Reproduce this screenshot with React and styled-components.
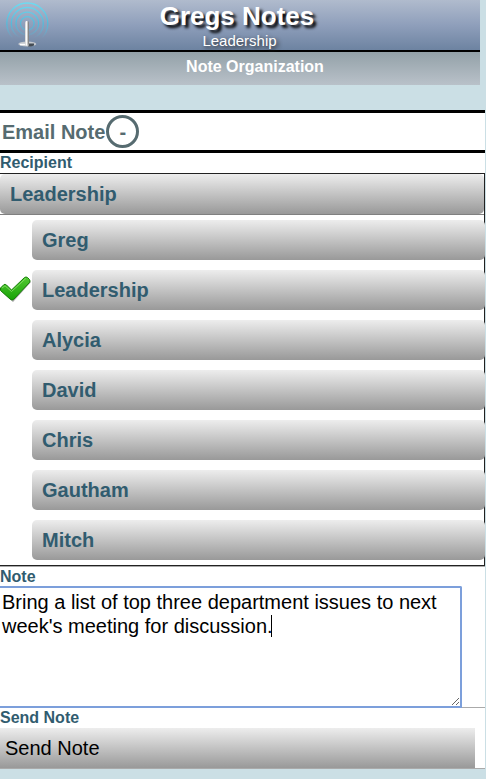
import React, { useState } from "react";
import styled, { createGlobalStyle } from "styled-components";

const GlobalStyle = createGlobalStyle`
  *, *::before, *::after { box-sizing: border-box; }
  body {
    margin: 0;
    background: #cbdfe5;
    font-family: "Liberation Sans", Arial, sans-serif;
    overflow-x: hidden;
  }
`;

const steel = "#315c6f";
const silver = "linear-gradient(#ededed, #999999)";

const Page = styled.div`
  display: flex;
  flex-direction: column;
  padding-right: 1px;
`;

const Header = styled.header`
  display: grid;
  grid-template-columns: 54px 1fr 60px;
  height: 52px;
  margin-right: 5px;
  border-bottom: 2px solid #000;
  background: linear-gradient(#b0bbcd, #8f9fbb 50%, #6d83a1);
`;

const Titles = styled.div`
  display: flex;
  flex-direction: column;
  align-items: center;
  color: #fff;
`;

const Title = styled.h1`
  margin: 0;
  font-size: 26px;
  line-height: 32px;
  text-shadow: 3px 3px 3px #000;
`;

const Subtitle = styled.div`
  padding-left: 5px;
  font-size: 15px;
  line-height: 18px;
  text-shadow: 2px 2px 4px #222;
`;

const Organization = styled.h2`
  height: 33px;
  margin: 0 5px 25px 0;
  padding: 0 0 4px 30px;
  background: linear-gradient(#93a1a8, #b9c1c9);
  color: #fff;
  font-size: 16px;
  line-height: 29px;
  text-align: center;
`;

const Panel = styled.main`
  display: flex;
  flex-direction: column;
  background: #fff;
  border-bottom: 1px solid #aaa;
`;

const PanelHeader = styled.div`
  display: flex;
  align-items: center;
  gap: 1px;
  height: 43px;
  padding-left: 2px;
  border: solid #000;
  border-width: 3px 0;
  color: #566b70;
`;

const PanelTitle = styled.h3`
  margin: 0;
  font-size: 20px;
  line-height: 24px;
`;

const Toggle = styled.button`
  width: 33px;
  height: 33px;
  padding: 0;
  border: 3px solid #566b70;
  border-radius: 50%;
  background: #fff;
  color: #566b70;
  font: bold 20px/24px "Liberation Sans", Arial, sans-serif;
`;

const Label = styled.label`
  display: block;
  height: ${(p) => p.$height || 20}px;
  color: ${steel};
  font-size: 16px;
  font-weight: bold;
  line-height: 19px;
`;

const Recipients = styled.div`
  border: 1px solid #222;
  border-left: 0;
  box-shadow: 0 1px 0 #aaa;
  margin-bottom: 1px;
`;

const Choice = styled.button`
  display: block;
  width: 100%;
  height: 40px;
  padding: 0 10px;
  border: 0;
  border-radius: 5px;
  background: ${silver};
  color: ${steel};
  font: bold 20px/40px "Liberation Sans", Arial, sans-serif;
  text-align: left;
`;

const Current = styled.div`
  border-bottom: 1px solid #808080;
`;

const Options = styled.ul`
  display: grid;
  gap: 10px;
  margin: 0 -1px 0 0;
  padding: 5px 0;
  list-style: none;
`;

const Option = styled.li`
  display: grid;
  grid-template-columns: 32px 1fr;
  align-items: center;
`;

const Mark = styled.span`
  display: block;
  height: 28px;
`;

const NoteField = styled.div`
  position: relative;
  display: flex;
  border-bottom: 1px solid #aaa;
`;

const NoteArea = styled.textarea`
  width: calc(100% - 23px);
  height: 122px;
  margin: 0 0 -1px;
  padding: 2px;
  border: 2px solid #7c9fdb;
  border-left-width: 0;
  border-radius: 0 2px 0 0;
  outline: 0;
  background: #fff;
  color: #000;
  font: 20px/24px "Liberation Sans", Arial, sans-serif;
  caret-color: transparent;
  resize: both;
`;

const Caret = styled.span`
  position: absolute;
  top: 29px;
  left: 271px;
  width: 1px;
  height: 22px;
  background: #000;
`;

const Send = styled.button`
  width: calc(100% - 10px);
  height: 40px;
  padding: 0 5px;
  border: 0;
  background: ${silver};
  color: #000;
  font: 20px/40px "Liberation Sans", Arial, sans-serif;
  text-align: left;
`;

function Antenna() {
  return (
    <svg width="54" height="50" viewBox="0 0 54 50" aria-hidden="true">
      <defs>
        <linearGradient id="mast">
          <stop offset="0" stopColor="#ccc" />
          <stop offset=".4" stopColor="#fff" />
          <stop offset="1" stopColor="#666" />
        </linearGradient>
        <linearGradient id="wave" gradientUnits="userSpaceOnUse" x1="0" y1="3" x2="0" y2="38">
          <stop offset="0" stopColor="#6bdcf2" />
          <stop offset=".6" stopColor="#55b9d9" />
          <stop offset="1" stopColor="#55b9d9" stopOpacity="0" />
        </linearGradient>
      </defs>
      <g fill="none" stroke="url(#wave)" strokeWidth="1.3">
        <circle cx="27.300" cy="23.500" r="20.500" />
        <circle cx="27.300" cy="23.500" r="16" />
        <circle cx="27.300" cy="23.500" r="11.300" />
        <circle cx="27.300" cy="23.500" r="6.800" />
      </g>
      <ellipse cx="27.300" cy="44" rx="9" ry="2.500" fill="#c4c8ce" />
      <path d="M29 43.500h5v2l-3 1h-3z" fill="#444c55" />
      <path d="M20 44.500h9" stroke="#fff" strokeWidth="1.500" />
      <rect x="25" y="21" width="4" height="24.500" rx="1.500" fill="url(#mast)" />
    </svg>
  );
}

function Check() {
  return (
    <svg width="32" height="28" viewBox="0 0 32 28" aria-hidden="true">
      <defs>
        <linearGradient id="tick" x1="0" y1="0" x2="0" y2="1">
          <stop offset="0" stopColor="#52c832" />
          <stop offset="1" stopColor="#18a307" />
        </linearGradient>
      </defs>
      <path d="M1 15l4-4 8 7L27 3l4 3-18 20z" fill="#555" opacity=".55" />
      <path
        d="M0.500 12L4 8.500Q5.200 8 6.500 9L11.500 14 24.500 1.500Q26 0.500 27.500 1.500L29.500 3.500Q30.500 5 29.500 6.500L14 23Q12 25 10 23L0.500 14.500Z"
        fill="url(#tick)"
        stroke="#178008"
      />
      <path d="M2 12L5 9.800 11.500 15.500 26 2.300" fill="none" stroke="#7cdc5e" />
    </svg>
  );
}

const people = ["Greg", "Leadership", "Alycia", "David", "Chris", "Gautham", "Mitch"];

export default function App() {
  const [recipient, setRecipient] = useState("Leadership");
  const [open, setOpen] = useState(true);
  const [note, setNote] = useState(
    "Bring a list of top three department issues to next week's meeting for discussion."
  );

  return (
    <Page>
      <GlobalStyle />
      <Header>
        <Antenna />
        <Titles>
          <Title>Gregs Notes</Title>
          <Subtitle>{recipient}</Subtitle>
        </Titles>
      </Header>
      <Organization>Note Organization</Organization>
      <Panel>
        <PanelHeader>
          <PanelTitle>Email Note</PanelTitle>
          <Toggle type="button" aria-label="Toggle email note" aria-expanded={open} onClick={() => setOpen(!open)}>
            {open ? "-" : "+"}
          </Toggle>
        </PanelHeader>
        {open && (
          <>
            <Label htmlFor="recipient">Recipient</Label>
            <Recipients>
              <Current>
                <Choice id="recipient" type="button">{recipient}</Choice>
              </Current>
              <Options>
                {people.map((name) => (
                  <Option key={name}>
                    <Mark>{name === recipient && <Check />}</Mark>
                    <Choice type="button" aria-pressed={name === recipient} onClick={() => setRecipient(name)}>
                      {name}
                    </Choice>
                  </Option>
                ))}
              </Options>
            </Recipients>
            <Label htmlFor="note" $height={19}>Note</Label>
            <NoteField>
              <NoteArea id="note" value={note} onChange={(e) => setNote(e.target.value)} />
              <Caret />
            </NoteField>
            <Label htmlFor="send">Send Note</Label>
            <Send id="send" type="button">Send Note</Send>
          </>
        )}
      </Panel>
    </Page>
  );
}
